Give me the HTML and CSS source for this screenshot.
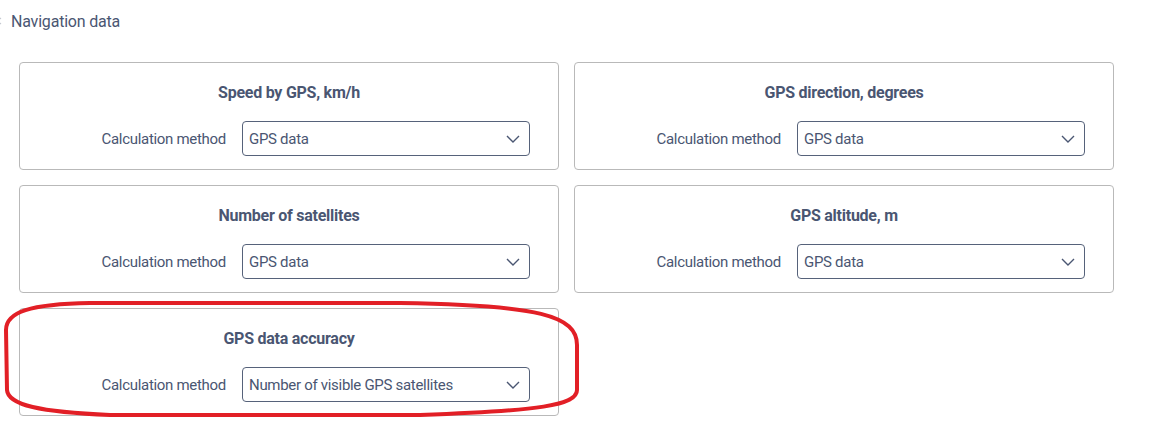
FILE: index.html
```html
<!DOCTYPE html>
<html lang="en">
<head>
    <meta charset="UTF-8">
    <title>Navigation data</title>
    <link rel="stylesheet" href="styles.css">
</head>
<body>
    <div class="section-head">
        <svg class="toggle" width="8" height="10" viewBox="0 0 8 10"><path d="M5 2 L1 5 L5 8" fill="none" stroke="#c4c8d0" stroke-width="1.2"/></svg>
        <span>Navigation data</span>
    </div>

    <div class="grid">
        <div class="card">
            <div class="card-title">Speed by GPS, km/h</div>
            <div class="form-row">
                <label class="label">Calculation method</label>
                <div class="select">
                    <span>GPS data</span>
                    <svg width="14" height="8" viewBox="0 0 14 8"><path d="M1 1 L7 7 L13 1" fill="none" stroke="#4a5672" stroke-width="1.4"/></svg>
                </div>
            </div>
        </div>
        <div class="card">
            <div class="card-title">GPS direction, degrees</div>
            <div class="form-row">
                <label class="label">Calculation method</label>
                <div class="select">
                    <span>GPS data</span>
                    <svg width="14" height="8" viewBox="0 0 14 8"><path d="M1 1 L7 7 L13 1" fill="none" stroke="#4a5672" stroke-width="1.4"/></svg>
                </div>
            </div>
        </div>
        <div class="card">
            <div class="card-title">Number of satellites</div>
            <div class="form-row">
                <label class="label">Calculation method</label>
                <div class="select">
                    <span>GPS data</span>
                    <svg width="14" height="8" viewBox="0 0 14 8"><path d="M1 1 L7 7 L13 1" fill="none" stroke="#4a5672" stroke-width="1.4"/></svg>
                </div>
            </div>
        </div>
        <div class="card">
            <div class="card-title">GPS altitude, m</div>
            <div class="form-row">
                <label class="label">Calculation method</label>
                <div class="select">
                    <span>GPS data</span>
                    <svg width="14" height="8" viewBox="0 0 14 8"><path d="M1 1 L7 7 L13 1" fill="none" stroke="#4a5672" stroke-width="1.4"/></svg>
                </div>
            </div>
        </div>
        <div class="card">
            <div class="card-title">GPS data accuracy</div>
            <div class="form-row">
                <label class="label">Calculation method</label>
                <div class="select">
                    <span>Number of visible GPS satellites</span>
                    <svg width="14" height="8" viewBox="0 0 14 8"><path d="M1 1 L7 7 L13 1" fill="none" stroke="#4a5672" stroke-width="1.4"/></svg>
                </div>
            </div>
        </div>
    </div>

    <!-- red highlight drawn over the last card -->
    <svg class="highlight" width="1149" height="422" viewBox="0 0 1149 422">
        <path d="M90 303 L400 303 C540 305 577 316 577 345 L577 390 C577 405 540 411 420 415 L110 415 C40 412 8 405 7 390 L6 330 C6 312 30 304 90 303 Z" fill="none" stroke="#e21f26" stroke-width="4"/>
    </svg>
</body>
</html>
```

FILE: styles.css
```css
body {
    margin: 0;
    background: #fff;
    font-family: Roboto, "Liberation Sans", sans-serif;
    color: #4a5672;
    position: relative;
    height: 422px;
    overflow: hidden;
}
.section-head {
    display: flex;
    align-items: center;
    height: 20px;
    padding-top: 11px;
    font-size: 16px;
    letter-spacing: -0.2px;
}
.section-head .toggle {
    margin-left: -4px;
    margin-right: 7px;
}
.grid {
    display: grid;
    grid-template-columns: 540px 540px;
    gap: 15px;
    margin: 31px 0 0 19px;
}
.card {
    border: 1px solid #b9b9b9;
    border-radius: 4px;
    padding: 20px 0 13px;
}
.card-title {
    text-align: center;
    font-weight: bold;
    font-size: 16px;
    line-height: 20px;
    letter-spacing: -0.25px;
}
.form-row {
    display: flex;
    align-items: center;
    margin-top: 18px;
}
.label {
    width: 206px;
    margin-right: 16px;
    text-align: right;
    font-size: 15px;
    letter-spacing: -0.3px;
}
.select {
    width: 288px;
    height: 35px;
    box-sizing: border-box;
    border: 1px solid #56627a;
    border-radius: 4px;
    display: flex;
    align-items: center;
    justify-content: space-between;
    padding: 0 9px 0 6px;
    font-size: 15px;
    letter-spacing: -0.3px;
}
.highlight {
    position: absolute;
    left: 0;
    top: 0;
}
```
